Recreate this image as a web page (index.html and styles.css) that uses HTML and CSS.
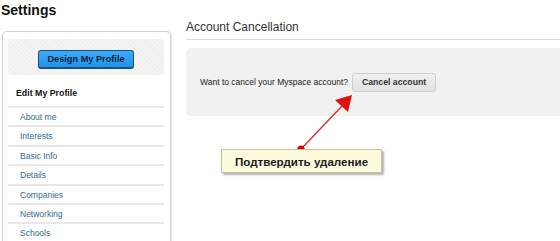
FILE: index.html
```html
<!DOCTYPE html>
<html>
<head>
<meta charset="utf-8">
<link rel="stylesheet" href="styles.css">
</head>
<body>
<div class="page">
  <aside class="side">
    <h1 class="title">Settings</h1>
    <div class="panel">
      <div class="design-box">
        <span class="design-btn">Design My Profile</span>
      </div>
      <div class="edit-head">Edit My Profile</div>
      <ul class="menu">
        <li>About me</li>
        <li>Interests</li>
        <li>Basic Info</li>
        <li>Details</li>
        <li>Companies</li>
        <li>Networking</li>
        <li>Schools</li>
      </ul>
    </div>
  </aside>
  <main class="main">
    <h2 class="section-title">Account Cancellation</h2>
    <div class="cancel-box">
      <span class="cancel-text">Want to cancel your Myspace account?</span>
      <span class="cancel-btn">Cancel account</span>
    </div>
  </main>
</div>
<svg class="arrow" width="560" height="241" viewBox="0 0 560 241">
  <line x1="301" y1="149" x2="343" y2="105" stroke="#e02020" stroke-width="1.2"/>
  <polygon points="352,95 348,112 335,100" fill="#e01010"/>
  <circle cx="301" cy="149" r="3.6" fill="#dd0000"/>
</svg>
<div class="callout">Подтвердить удаление</div>
</body>
</html>
```
FILE: styles.css
```css
html, body {
  margin: 0;
  padding: 0;
  background: #fff;
  overflow: hidden;
}
body {
  width: 560px;
  height: 241px;
  position: relative;
  font-family: "Liberation Sans", Arial, sans-serif;
  color: #222;
}
.page {
  display: flex;
  gap: 15px;
  padding-left: 2px;
  height: 241px;
  overflow: hidden;
}
.side {
  width: 169px;
  flex: none;
}
.title {
  margin: 0 0 11px -1px;
  font-size: 14px;
  line-height: 20px;
  font-weight: bold;
  color: #111;
}
.panel {
  box-sizing: border-box;
  width: 169px;
  height: 210px;
  border: 1px solid #d4d4d4;
  border-bottom: none;
  border-radius: 5px 5px 0 0;
  padding: 7px 6px 0 5px;
  box-shadow: 1px 0 1px rgba(0,0,0,0.12);
  overflow: hidden;
}
.design-box {
  display: flex;
  justify-content: center;
  padding: 11px 0 6px;
  border-radius: 3px;
  background: repeating-linear-gradient(45deg, #eeeeee 0, #eeeeee 1px, #f4f4f4 1px, #f4f4f4 3px);
}
.design-btn {
  box-sizing: border-box;
  width: 96px;
  height: 19px;
  display: flex;
  align-items: center;
  justify-content: center;
  background: linear-gradient(#3fabf8, #1f93ec);
  border: 1px solid #1d4f7c;
  border-bottom-width: 2px;
  border-radius: 3px;
  font-size: 9.2px;
  font-weight: bold;
  color: #0a1f38;
}
.edit-head {
  padding: 11px 0 0 8px;
  height: 20px;
  line-height: 14px;
  font-size: 8.8px;
  font-weight: bold;
  color: #111;
}
.menu {
  list-style: none;
  margin: 0;
  padding: 0;
}
.menu li {
  height: 17.4px;
  line-height: 18px;
  border-top: 2px solid #e8e8e8;
  padding-left: 12px;
  font-size: 8.5px;
  color: #336b90;
}
.main {
  flex: 1;
  margin-right: -20px;
  padding-top: 19px;
}
.section-title {
  margin: 0;
  padding-bottom: 4px;
  font-size: 12px;
  line-height: 16px;
  font-weight: normal;
  color: #333;
  border-bottom: 1px solid #dedede;
}
.cancel-box {
  margin-top: 8px;
  height: 68px;
  background: #f1f1f1;
  border-radius: 5px;
  display: flex;
  align-items: center;
  gap: 4px;
  padding-left: 14px;
}
.cancel-text {
  font-size: 8.5px;
  color: #222;
}
.cancel-btn {
  box-sizing: border-box;
  height: 19px;
  width: 84px;
  display: flex;
  align-items: center;
  justify-content: center;
  border: 1px solid #cfcfcf;
  border-radius: 3px;
  background: linear-gradient(#f0f0f0, #e2e2e2);
  font-size: 8.7px;
  font-weight: bold;
  color: #333;
}
.arrow {
  position: absolute;
  left: 0;
  top: 0;
}
.callout {
  position: absolute;
  left: 221px;
  top: 149px;
  box-sizing: border-box;
  width: 161px;
  height: 24px;
  display: flex;
  align-items: center;
  justify-content: center;
  background: #fdfbdc;
  border: 1px solid #c8c29a;
  box-shadow: 2px 2px 2px rgba(0,0,0,0.3);
  font-size: 11.6px;
  font-weight: bold;
  color: #1c1c1c;
}
```
